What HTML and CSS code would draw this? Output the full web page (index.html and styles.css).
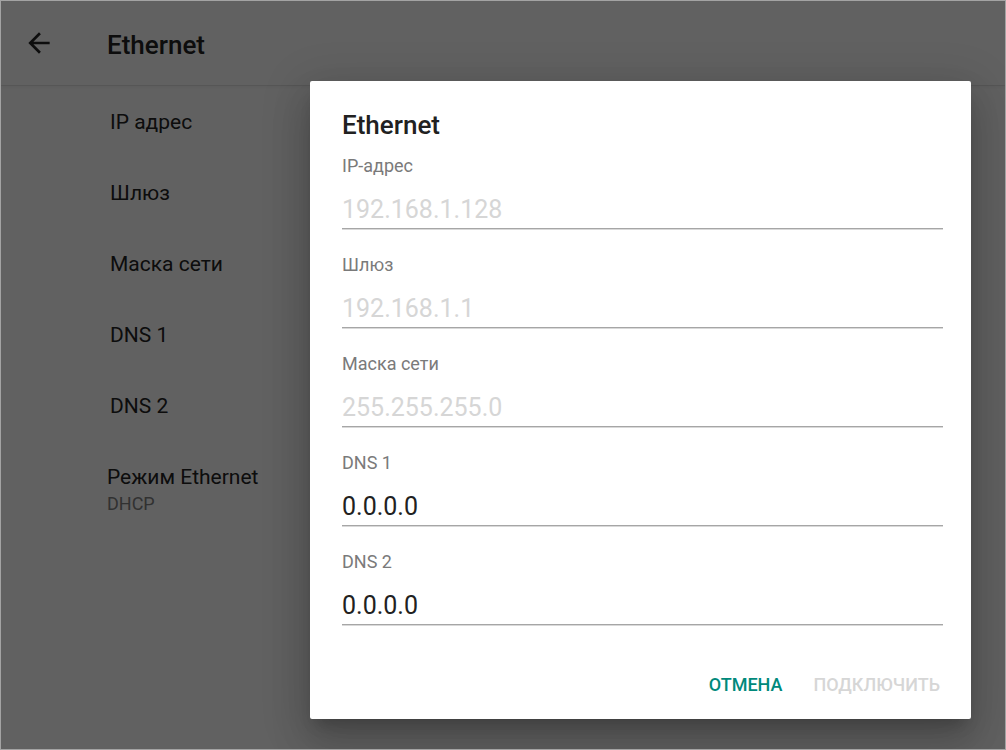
FILE: index.html
```html
<!DOCTYPE html>
<html lang="ru">
<head>
<meta charset="utf-8">
<title>Ethernet</title>
<link rel="stylesheet" href="styles.css">
</head>
<body>
<div class="screen">
  <header class="toolbar">
    <svg class="back-icon" viewBox="0 0 24 24" width="32" height="32" aria-hidden="true">
      <path d="M20 11H7.83l5.59-5.59L12 4l-8 8 8 8 1.41-1.41L7.83 13H20v-2z"/>
    </svg>
    <h1 class="toolbar-title">Ethernet</h1>
  </header>
  <ul class="prefs">
    <li class="pref">IP адрес</li>
    <li class="pref">Шлюз</li>
    <li class="pref">Маска сети</li>
    <li class="pref">DNS 1</li>
    <li class="pref">DNS 2</li>
    <li class="pref pref-two">
      <div class="pref-title">Режим Ethernet</div>
      <div class="pref-summary">DHCP</div>
    </li>
  </ul>
  <div class="scrim"></div>
  <div class="dialog">
    <h2 class="dialog-title">Ethernet</h2>
    <div class="fields">
      <div class="field">
        <div class="field-label">IP-адрес</div>
        <div class="field-value disabled">192.168.1.128</div>
      </div>
      <div class="field">
        <div class="field-label">Шлюз</div>
        <div class="field-value disabled">192.168.1.1</div>
      </div>
      <div class="field">
        <div class="field-label">Маска сети</div>
        <div class="field-value disabled">255.255.255.0</div>
      </div>
      <div class="field">
        <div class="field-label">DNS 1</div>
        <div class="field-value">0.0.0.0</div>
      </div>
      <div class="field">
        <div class="field-label">DNS 2</div>
        <div class="field-value">0.0.0.0</div>
      </div>
    </div>
    <div class="actions">
      <span class="btn btn-primary">ОТМЕНА</span>
      <span class="btn btn-disabled">ПОДКЛЮЧИТЬ</span>
    </div>
  </div>
</div>
</body>
</html>
```

FILE: styles.css
```css
* { box-sizing: border-box; }

html, body {
  margin: 0;
  padding: 0;
}

body {
  font-family: Roboto, "Noto Sans", "DejaVu Sans", sans-serif;
  background: #a3a3a3;
}

.screen {
  position: relative;
  width: 1006px;
  height: 750px;
  border: 1px solid #a3a3a3;
  background: #f3f3f3;
  overflow: hidden;
}

.toolbar {
  height: 84px;
  display: flex;
  align-items: center;
  padding-left: 22px;
  background: #f3f3f3;
  box-shadow: 0 1px 0 rgba(0, 0, 0, 0.07), 0 2px 4px rgba(0, 0, 0, 0.06);
  position: relative;
}

.back-icon {
  width: 32px;
  height: 32px;
  fill: #212121;
  flex: none;
}

.toolbar-title {
  margin: 0 0 0 52px;
  padding-top: 3px;
  font-size: 26px;
  line-height: 32px;
  font-weight: 500;
  color: #212121;
}

.prefs {
  list-style: none;
  margin: 0;
  padding: 2px 0 0 0;
}

.pref {
  height: 71px;
  line-height: 71px;
  padding-left: 109px;
  font-size: 21px;
  color: #212121;
}

.pref-two {
  line-height: normal;
  padding-left: 106px;
  padding-top: 21px;
}

.pref-title {
  font-size: 21px;
  line-height: 28px;
  color: #212121;
}

.pref-summary {
  margin-top: 2px;
  font-size: 18px;
  line-height: 22px;
  color: #7c7c7c;
}

.scrim {
  position: absolute;
  inset: 0;
  background: rgba(0, 0, 0, 0.6);
}

.dialog {
  position: absolute;
  left: 309px;
  top: 80px;
  width: 661px;
  height: 638px;
  background: #ffffff;
  border-radius: 2px;
  padding: 28px 28px 0 32px;
  display: flex;
  flex-direction: column;
  box-shadow: 0 11px 15px -7px rgba(0, 0, 0, 0.2),
              0 24px 38px 3px rgba(0, 0, 0, 0.14),
              0 9px 46px 8px rgba(0, 0, 0, 0.12);
}

.dialog-title {
  margin: 0;
  font-size: 26px;
  line-height: 32px;
  font-weight: 500;
  color: #212121;
}

.fields {
  margin-top: 13px;
  display: flex;
  flex-direction: column;
  gap: 24px;
}

.field-label {
  font-size: 18px;
  line-height: 24px;
  color: #7a7a7a;
}

.field-value {
  margin-top: 16px;
  font-size: 25px;
  line-height: 32px;
  color: #212121;
  padding-bottom: 2px;
  border-bottom: 1px solid #a6a6a6;
  box-shadow: 0 1px 0 #d9d9d9;
}

.field-value.disabled {
  color: #d6d6d6;
}

.actions {
  margin-top: 36px;
  margin-right: -8px;
  display: flex;
  justify-content: flex-end;
  gap: 9px;
}

.btn {
  padding: 12px 11px;
  font-size: 18px;
  line-height: 24px;
  font-weight: 500;
}

.btn-primary {
  color: #00897b;
}

.btn-disabled {
  color: #d6d6d6;
}
```
